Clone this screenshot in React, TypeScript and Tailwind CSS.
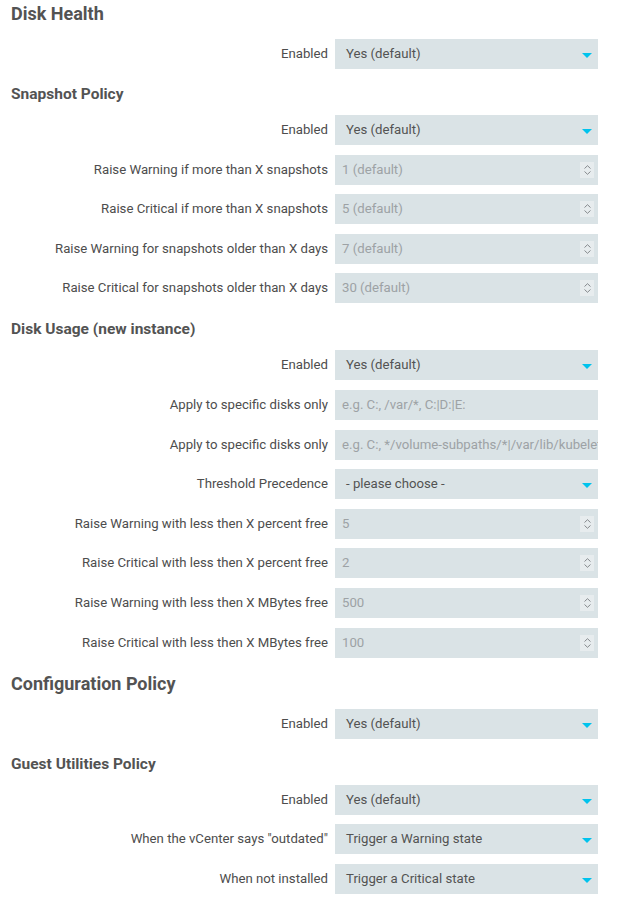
import React from "react";

type Field =
  | { kind: "select"; label: string; value: string }
  | { kind: "number"; label: string; placeholder: string }
  | { kind: "text"; label: string; placeholder: string };

type Section = {
  title: string;
  big?: boolean;
  spaceTop: string;
  fields: Field[];
};

const sections: Section[] = [
  {
    title: "Disk Health",
    big: true,
    spaceTop: "",
    fields: [{ kind: "select", label: "Enabled", value: "Yes (default)" }],
  },
  {
    title: "Snapshot Policy",
    spaceTop: "mt-[15px]",
    fields: [
      { kind: "select", label: "Enabled", value: "Yes (default)" },
      { kind: "number", label: "Raise Warning if more than X snapshots", placeholder: "1 (default)" },
      { kind: "number", label: "Raise Critical if more than X snapshots", placeholder: "5 (default)" },
      { kind: "number", label: "Raise Warning for snapshots older than X days", placeholder: "7 (default)" },
      { kind: "number", label: "Raise Critical for snapshots older than X days", placeholder: "30 (default)" },
    ],
  },
  {
    title: "Disk Usage (new instance)",
    spaceTop: "mt-[16px]",
    fields: [
      { kind: "select", label: "Enabled", value: "Yes (default)" },
      { kind: "text", label: "Apply to specific disks only", placeholder: "e.g. C:, /var/*, C:|D:|E:" },
      {
        kind: "text",
        label: "Apply to specific disks only",
        placeholder: "e.g. C:, */volume-subpaths/*|/var/lib/kubelet/pods/*",
      },
      { kind: "select", label: "Threshold Precedence", value: "- please choose -" },
      { kind: "number", label: "Raise Warning with less then X percent free", placeholder: "5" },
      { kind: "number", label: "Raise Critical with less then X percent free", placeholder: "2" },
      { kind: "number", label: "Raise Warning with less then X MBytes free", placeholder: "500" },
      { kind: "number", label: "Raise Critical with less then X MBytes free", placeholder: "100" },
    ],
  },
  {
    title: "Configuration Policy",
    big: true,
    spaceTop: "mt-[13px]",
    fields: [{ kind: "select", label: "Enabled", value: "Yes (default)" }],
  },
  {
    title: "Guest Utilities Policy",
    spaceTop: "mt-[15px]",
    fields: [
      { kind: "select", label: "Enabled", value: "Yes (default)" },
      { kind: "select", label: 'When the vCenter says "outdated"', value: "Trigger a Warning state" },
      { kind: "select", label: "When not installed", value: "Trigger a Critical state" },
    ],
  },
];

function Caret() {
  return (
    <svg width="10" height="5" viewBox="0 0 10 5" className="absolute right-[6px] top-[14px]">
      <path d="M0 0h10L5 5z" fill="#00c3ed" />
    </svg>
  );
}

function Spinner() {
  return (
    <div className="absolute right-[4px] top-[7px] flex h-[16px] w-[14px] flex-col items-center justify-center gap-[2px] bg-[#e7ecee]">
      <svg width="7" height="4" viewBox="0 0 7 4">
        <path d="M0.5 3.5L3.5 0.7L6.5 3.5" fill="none" stroke="#7a7f82" strokeWidth="0.9" />
      </svg>
      <svg width="7" height="4" viewBox="0 0 7 4">
        <path d="M0.5 0.5L3.5 3.3L6.5 0.5" fill="none" stroke="#7a7f82" strokeWidth="0.9" />
      </svg>
    </div>
  );
}

function Control({ field }: { field: Field }) {
  if (field.kind === "select") {
    return (
      <div className="relative flex h-[30px] w-[263px] items-center bg-[#dae3e6] pl-[11px] text-[13.2px] text-[#535353]">
        {field.value}
        <Caret />
      </div>
    );
  }
  return (
    <div className="relative flex h-[30px] w-[263px] items-center overflow-hidden whitespace-nowrap bg-[#dae3e6] pl-[7px] text-[13.2px] text-[#9da2a5]">
      {field.placeholder}
      {field.kind === "number" ? <Spinner /> : null}
    </div>
  );
}

export default function App() {
  return (
    <div className="min-h-screen bg-white pt-px font-['Roboto',sans-serif] text-[#535353]">
      {sections.map((s) => (
        <section key={s.title} className={s.spaceTop}>
          <h2
            className={
              s.big
                ? "pl-[11px] text-[18px] font-bold leading-[26px]"
                : "pl-[11px] text-[15.5px] font-bold leading-[20px]"
            }
          >
            {s.title}
          </h2>
          <div className={s.big ? "mt-[12px] flex flex-col gap-[9.6px]" : "mt-[11px] flex flex-col gap-[9.6px]"}>
            {s.fields.map((f, j) => (
              <div key={j} className="flex items-center">
                <label className="w-[328px] text-right text-[13.2px] text-[#4d4d4d]">{f.label}</label>
                <div className="ml-[7px]">
                  <Control field={f} />
                </div>
              </div>
            ))}
          </div>
        </section>
      ))}
    </div>
  );
}
